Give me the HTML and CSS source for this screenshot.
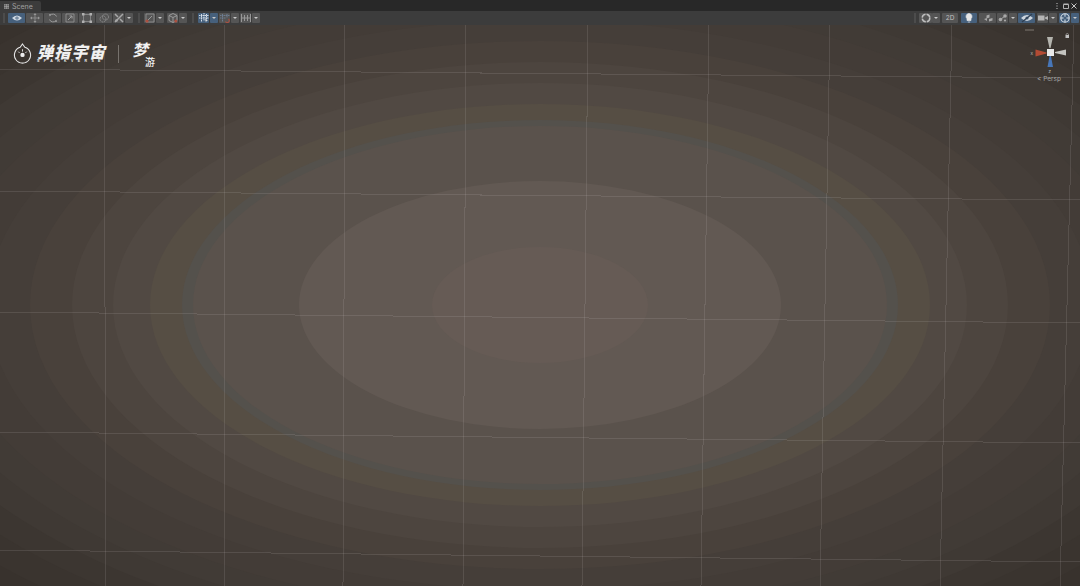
FILE: index.html
```html
<!DOCTYPE html>
<html lang="en">
<head>
<meta charset="utf-8">
<title>Scene</title>
<link rel="stylesheet" href="styles.css">
</head>
<body>
<div class="window">
  <div class="tabbar">
    <div class="tab">
      <svg class="tab-icon" viewBox="0 0 6 6"><path d="M0 1h6M0 3h6M0 5h6M1 0v6M3 0v6M5 0v6" stroke="#a8a8a8" stroke-width=".8"/></svg>
      <span>Scene</span>
    </div>
    <div class="win-controls">
      <svg viewBox="0 0 6 6"><path d="M3 0v1M3 2.500v1M3 5v1" stroke="#c8c8c8" stroke-width="1"/></svg>
      <svg viewBox="0 0 6 6"><path d="M.5 1.500h5v4h-5zM.5 1h5" fill="none" stroke="#c0c0c0" stroke-width=".9"/></svg>
      <svg viewBox="0 0 6 6"><path d="M.5.5l5 5M5.500.5l-5 5" stroke="#c8c8c8" stroke-width="1"/></svg>
    </div>
  </div>
  <div class="toolbar">
    <div class="tools">
      <i class="sep first"></i>
      <div class="group">
        <b class="btn w17 on"><svg viewBox="0 0 10 8"><path d="M0 4q5-5 10 0q-5 5-10 0z" fill="#cfd8e2"/><circle cx="5" cy="4" r="1.600" fill="#46607c"/><circle cx="5" cy="4" r=".7" fill="#cfd8e2"/></svg></b>
        <b class="btn w17"><svg viewBox="0 0 10 10"><path d="M5 0l1.500 2h-3zM5 10l1.500-2h-3zM0 5l2-1.500v3zM10 5L8 3.500v3z" fill="#989898"/><path d="M5 2v6M2 5h6" stroke="#8c8c8c" stroke-width=".9"/></svg></b>
        <b class="btn w17"><svg viewBox="0 0 10 10"><path d="M2 2.500A3.800 3.800 0 0 1 8.500 3.500M8 7.500A3.800 3.800 0 0 1 1.500 6.500" fill="none" stroke="#989898" stroke-width="1"/><path d="M1 1l2.500.3L1.500 3.500zM9 9l-2.500-.3 2-2.200z" fill="#989898"/></svg></b>
        <b class="btn w16"><svg viewBox="0 0 10 10"><path d="M1 1h8v8H1z" fill="none" stroke="#909090" stroke-width=".9"/><path d="M3 7l3.500-3.500M4.500 3h2.500v2.500" fill="none" stroke="#a8a8a8" stroke-width=".9"/></svg></b>
        <b class="btn w16"><svg viewBox="0 0 10 10"><path d="M1.500 1.500h7v7h-7z" fill="none" stroke="#909090" stroke-width=".8"/><path d="M0 0h2.500v2.500H0zM7.500 0H10v2.500H7.500zM0 7.500h2.500V10H0zM7.500 7.500H10V10H7.500z" fill="#b0b0b0"/></svg></b>
        <b class="btn w16"><svg viewBox="0 0 10 10"><circle cx="4" cy="6" r="3" fill="none" stroke="#8c8c8c" stroke-dasharray="1.500 .6"/><circle cx="6.500" cy="4" r="3" fill="none" stroke="#8c8c8c" stroke-dasharray="1.500 .6"/></svg></b>
      </div>
      <div class="group">
        <b class="btn w11"><svg viewBox="0 0 10 10"><path d="M1 1l3 3M9 9L6 6M9 1L1 9" stroke="#a8a8a8" stroke-width="1.500"/><circle cx="2.500" cy="7.500" r="1.300" fill="#a8a8a8"/></svg></b>
        <b class="btn caret"></b>
      </div>
      <i class="sep"></i>
      <div class="group">
        <b class="btn w11"><svg viewBox="0 0 10 10"><path d="M1 1h8v8H1z" fill="none" stroke="#909090" stroke-width=".9"/><path d="M3 7l4-4" stroke="#a0a0a0" stroke-width=".9"/><circle cx="2" cy="8" r="1.600" fill="#ab5040"/></svg></b>
        <b class="btn caret"></b>
      </div>
      <div class="group wide-gap">
        <b class="btn w11"><svg viewBox="0 0 10 10"><path d="M5 .5l4 2v5l-4 2-4-2v-5zM1 2.500l4 2 4-2M5 4.500v5" fill="none" stroke="#a0a0a0" stroke-width=".9"/><circle cx="7.800" cy="8" r="1.500" fill="#ab5040"/></svg></b>
        <b class="btn caret"></b>
      </div>
      <i class="sep"></i>
      <div class="group">
        <b class="btn w11 on"><svg viewBox="0 0 10 10"><path d="M2.500 1v8M5 0v8M7.500 1v6M0 2.500h10M0 5h10" stroke="#d4dce6" stroke-width="1" stroke-dasharray="1.500 .5"/><path d="M6 6l3 1.500-1.500.5-.5 1.500z" fill="#e4e4e4"/></svg></b>
        <b class="btn caret on"></b>
      </div>
      <div class="group">
        <b class="btn w11"><svg viewBox="0 0 10 10"><path d="M2.500 1v8M7 1v4M0 2.500h10M0 5h6" stroke="#6c7c90" stroke-width="1" stroke-dasharray="1.500 .5"/><path d="M8.500 6a2 2 0 1 1-3 2.500" fill="none" stroke="#ab5040" stroke-width="1.100"/></svg></b>
        <b class="btn caret"></b>
      </div>
      <div class="group">
        <b class="btn w11"><svg viewBox="0 0 10 10"><path d="M.5 1v8M9.500 1v8M3.500 2v6M6.500 2v6M.5 5h9" stroke="#989898" stroke-width="1"/></svg></b>
        <b class="btn caret"></b>
      </div>
    </div>
    <div class="tools">
      <i class="sep end"></i>
      <div class="group joined">
        <b class="btn w13"><svg viewBox="0 0 10 10"><circle cx="5" cy="5" r="3.800" fill="none" stroke="#c0c0c0" stroke-width="1.500" stroke-dasharray="5 1"/></svg></b>
        <b class="btn caret"></b>
      </div>
      <b class="btn label gap1">2D</b>
      <b class="btn w16 on gap2"><svg viewBox="0 0 10 10"><path d="M5 .5a3 3 0 0 1 2 5.200V7.500H3V5.700A3 3 0 0 1 5 .5zM3.800 9h2.400" fill="#e6e6e6" stroke="#e6e6e6" stroke-width=".7"/></svg></b>
      <b class="btn w17 gap1"><svg viewBox="0 0 10 10"><path d="M1 6l3-1v3zM3.500 2.500l3-1v3l-3 1zM6 6l3.500-1v2.500L6 8.500z" fill="#a8a8a8"/></svg></b>
      <div class="group">
        <b class="btn w11"><svg viewBox="0 0 10 10"><circle cx="2.500" cy="6.500" r="1.800" fill="#a8a8a8"/><circle cx="7" cy="3" r="1.800" fill="#a8a8a8"/><circle cx="7" cy="7.500" r="1.100" fill="#a8a8a8"/><path d="M2.500 6.500L7 3" stroke="#a8a8a8"/></svg></b>
        <b class="btn caret"></b>
      </div>
      <b class="btn w17 on"><svg class="icon-wide" viewBox="0 0 14 10"><path d="M1 5q6-6 12 0q-6 6-12 0z" fill="#cdd5de"/><circle cx="7" cy="5" r="1.600" fill="#46607c"/><path d="M2 9l10-8" stroke="#2f3f52" stroke-width="1.200"/></svg></b>
      <div class="group gap1">
        <b class="btn w11"><svg viewBox="0 0 10 10"><path d="M0 2.500h6.500v5H0zM7 4.500l3-1.500v4L7 5.500z" fill="#b4b4b4"/></svg></b>
        <b class="btn caret"></b>
      </div>
      <div class="group gap1">
        <b class="btn w11 on"><svg viewBox="0 0 10 10"><circle cx="5" cy="5" r="4.200" fill="none" stroke="#d8e0e8" stroke-width="1.100"/><path d="M5 1v8M1 5h8" stroke="#d8e0e8" stroke-width="1"/><circle cx="5" cy="5" r="1.600" fill="#46607c"/></svg></b>
        <b class="btn caret on"></b>
      </div>
    </div>
  </div>
  <div class="scene">
    <svg class="canvas" viewBox="0 0 1080 561" preserveAspectRatio="none">
      <rect width="1080" height="561" fill="#38322d"/>
      <g transform="translate(540 280)">
        <ellipse rx="740" ry="381" fill="#3a342f"/>
        <ellipse rx="700" ry="361" fill="#3c3631"/>
        <ellipse rx="665" ry="343" fill="#3f3934"/>
        <ellipse rx="630" ry="325" fill="#413b36"/>
        <ellipse rx="595" ry="307" fill="#433c37"/>
        <ellipse rx="552" ry="285" fill="#453e39"/>
        <ellipse rx="510" ry="264" fill="#49413b"/>
        <ellipse rx="468" ry="243" fill="#4d453f"/>
        <ellipse rx="427" ry="222" fill="#514943"/>
        <ellipse rx="390" ry="201" fill="#564e44"/>
        <ellipse rx="358" ry="185" fill="#54514c"/>
        <ellipse rx="347" ry="179" fill="#5a524c"/>
        <ellipse rx="241" ry="124" fill="#625953"/>
        <ellipse rx="108" ry="58" fill="#665b55"/>
      </g>
      <g class="grid-lines">
        <path d="M104 0L106 561M224 0L224 561M345 0L343 561M466 0L463 561M588 0L582 561M709 0L701 561M830 0L820 561M952 0L940 561M1074 0L1060 561"/>
        <path d="M0 44L1080 53M0 166L1080 175M0 287L1080 298M0 407L1080 418M0 525L1080 537"/>
      </g>
    </svg>
    <div class="logo">
      <svg class="logo-mark" viewBox="0 0 20 22"><path d="M10 1L12.500 4.500A8.500 8.500 0 1 1 7.500 4.500z" fill="none" stroke="#e6e6e6" stroke-width="1.100"/><circle cx="10" cy="12.500" r="2.300" fill="#eee"/><path d="M5.500 9l1.500 1.500M14.500 9L13 10.500M10 6.500v2.500" stroke="#ddd"/></svg>
      <div class="brand">
        <span class="brand-cn">弹指宇宙</span>
        <span class="brand-en">SPARKVERSE</span>
      </div>
      <i class="logo-divider"></i>
      <div class="dream"><span class="dream-a">梦</span><span class="dream-b">游</span></div>
    </div>
    <div class="gizmo">
      <svg class="gizmo-art" viewBox="0 0 60 60">
        <rect x="5" y="4" width="9" height="2" fill="#5c5650"/>
        <path d="M45.500 10h3.500v3h-3.500z" fill="#c0c0c0"/>
        <path d="M46 10a1.200 1.500 0 0 1 2.500 0" fill="none" stroke="#c0c0c0" stroke-width=".6"/>
        <path d="M27 12h6l-2.500 11h-1z" fill="#b4b4ae"/>
        <path d="M46 24.500v6l-11-2.500v-1z" fill="#c4c4c0"/>
        <path d="M15.500 24.500v7l11-3v-1z" fill="#b34b34"/>
        <path d="M27.500 42h5.500l-2.400-13h-.7z" fill="#4776b8"/>
        <rect x="27" y="24" width="7" height="7" fill="#e8e8e8"/>
        <text class="axis" x="10.500" y="29.500">x</text>
        <text class="axis" x="28.500" y="47.500">z</text>
      </svg>
      <span class="persp">&lt; Persp</span>
    </div>
  </div>
</div>
</body>
</html>
```
FILE: styles.css
```css
* { box-sizing: border-box; }
html, body { margin: 0; height: 100%; overflow: hidden; background: #282828; }
.window { width: 1080px; height: 586px; display: flex; flex-direction: column; font-family: "Inter", "Liberation Sans", sans-serif; }
.tabbar { height: 11px; background: #282828; display: flex; justify-content: space-between; }
.tab { width: 41px; height: 10px; margin-top: 1px; background: #3c3c3c; display: flex; align-items: center; gap: 3px; padding-left: 4px; color: #a0a0a0; font-size: 7px; border-radius: 0 2px 0 0; }
.tab-icon { width: 5px; height: 5px; }
.win-controls { display: flex; align-items: center; gap: 2.500px; padding-right: 3px; }
.win-controls svg { width: 6px; height: 6px; }
.toolbar { height: 14px; background: #3c3c3c; display: flex; justify-content: space-between; align-items: center; padding: 0 1px 0 3px; }
.tools { display: flex; align-items: center; gap: 1px; }
.sep { width: 2px; height: 10px; background: #4c4c4c; margin: 0 3px 0 4px; }
.sep.first { margin: 0 2px 0 0; }
.sep.end { margin: 0 2px 0 0; }
.group { display: flex; gap: 1px; }
.group.joined { gap: 0; }
.wide-gap { margin-left: 2px; }
.gap1 { margin-left: 1px; }
.gap2 { margin-left: 2px; }
.btn { height: 10px; background: #555; display: flex; align-items: center; justify-content: center; border-radius: 1px; font-weight: 400; }
.btn svg { width: 10px; height: 10px; }
.btn svg.icon-wide { width: 14px; }
.btn.on { background: #46607c; }
.w11 { width: 11px; }
.w13 { width: 13px; }
.w16 { width: 16px; }
.w17 { width: 17px; }
.caret { width: 8px; }
.caret::after { content: ""; border-left: 2.500px solid transparent; border-right: 2.500px solid transparent; border-top: 2.500px solid #c8c8c8; }
.label { width: 16px; color: #c0c0c0; font-size: 6.500px; }
.scene { flex: 1; position: relative; overflow: hidden; }
.canvas { position: absolute; inset: 0; width: 100%; height: 100%; display: block; }
.grid-lines path { fill: none; stroke: rgba(205, 200, 195, .14); stroke-width: 1; shape-rendering: crispEdges; }
.logo { position: absolute; left: 13px; top: 18px; height: 21px; display: flex; align-items: center; color: #f0f0f0; }
.logo-mark { width: 19px; height: 21px; }
.brand { margin-left: 5px; width: 71px; height: 21px; display: flex; flex-direction: column; align-items: flex-start; }
.brand-cn { display: block; font-family: "Noto Sans CJK SC", sans-serif; font-size: 16px; line-height: 16px; font-weight: 900; font-style: italic; letter-spacing: 1.300px; white-space: nowrap; }
.brand-en { display: block; font-family: "Liberation Sans", sans-serif; font-size: 3.500px; line-height: 5px; font-weight: 700; letter-spacing: 4.400px; white-space: nowrap; color: #eee; }
.logo-divider { width: 1px; height: 18px; background: #77726d; margin-left: 10px; }
.dream { margin-left: 13px; width: 26px; height: 21px; position: relative; font-family: "Noto Sans CJK SC", sans-serif; color: #f2f2f2; }
.dream-a { position: absolute; left: 0; top: -2px; font-size: 16px; line-height: 16px; font-weight: 700; font-style: italic; }
.dream-b { position: absolute; left: 13px; top: 14px; font-size: 10px; line-height: 10px; font-weight: 500; }
.gizmo { position: absolute; left: 1020px; top: 0; width: 60px; height: 60px; }
.gizmo-art { width: 60px; height: 60px; display: block; }
.axis { font-size: 5px; fill: #b8b8b8; font-family: "Liberation Sans", sans-serif; }
.persp { position: absolute; left: 17px; top: 50px; font-size: 6.500px; line-height: 8px; color: #a5a5a5; white-space: nowrap; }
```
